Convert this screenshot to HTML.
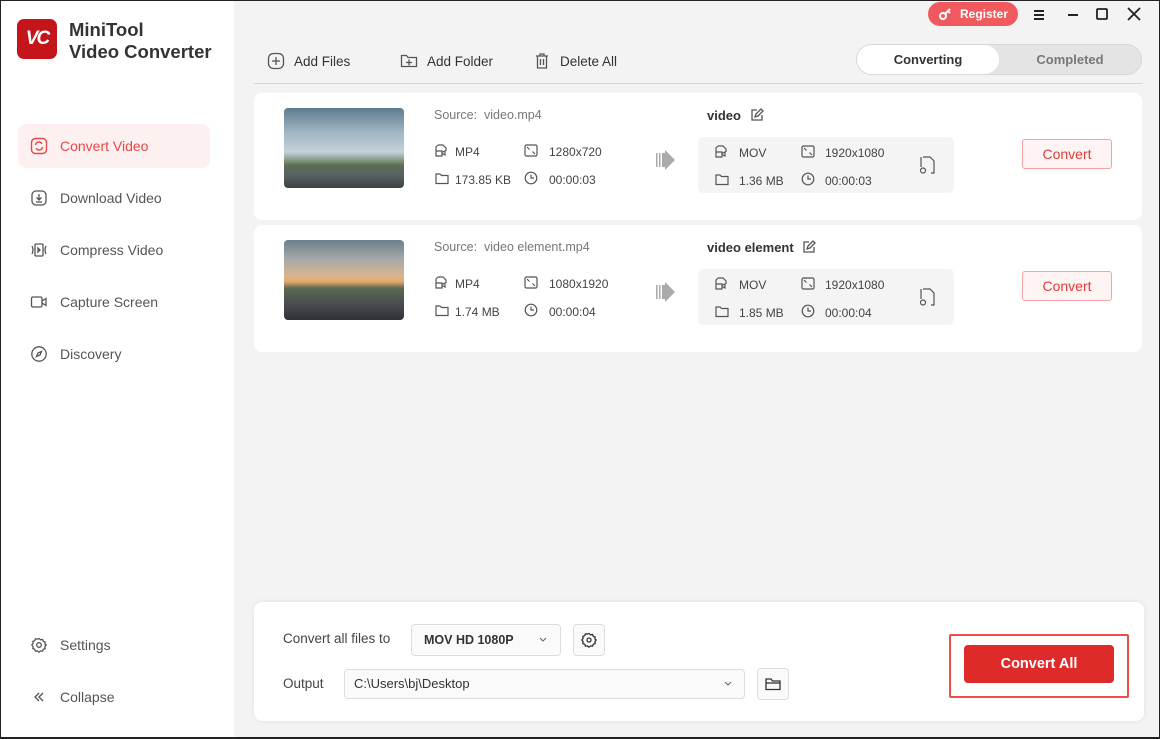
<!DOCTYPE html>
<html><head><meta charset="utf-8"><style>
*{margin:0;padding:0;box-sizing:border-box}
body{width:1160px;height:739px;overflow:hidden;background:#f3f3f3;font-family:"Liberation Sans",sans-serif;color:#333;position:relative}
.a{position:absolute}
.side{left:0;top:0;width:234px;height:739px;background:#fff}
.nav{left:18px;width:192px;height:44px;display:flex;align-items:center;padding-left:12px;font-size:14px;color:#555}
.nav svg{margin-right:12px}
.card{left:254px;width:888px;height:127px;background:#fff;border-radius:8px}
.sm{font-size:12.5px;color:#444}
.g{color:#777}
svg{display:block}
.ic{stroke:#555;fill:none;stroke-width:1.3}
.btn{width:90px;height:30px;border:1px solid #f3a3a3;background:#fff4f4;border-radius:3px;color:#e53a3a;font-size:14px;text-align:center;line-height:28px}
.out{left:698px;width:256px;height:56px;background:#f4f4f4;border-radius:5px}
</style></head><body>
<div class="a side"></div>
<div class="a" style="left:17px;top:19px;width:40px;height:40px;border-radius:7px;background:#c4151b;color:#fff;font-weight:bold;font-style:italic;font-size:19px;text-align:center;line-height:40px;letter-spacing:-2px">VC</div>
<div class="a" style="left:69px;top:19px;font-size:18.5px;font-weight:bold;color:#333;line-height:22px">MiniTool<br>Video Converter</div>
<div class="a" style="left:18px;top:124px;width:192px;height:44px;background:#fdf0f0;border-radius:8px"></div>
<div class="a nav" style="top:124px;color:#e94646">
<svg width="18" height="18" viewBox="0 0 18 18"><rect x="1.5" y="1.5" width="15" height="15" rx="4" fill="none" stroke="#e94646" stroke-width="1.4"/><path d="M5.5 8a3.5 3.5 0 0 1 6.5-1.2M12.5 10a3.5 3.5 0 0 1-6.5 1.2" fill="none" stroke="#e94646" stroke-width="1.4"/></svg>Convert Video</div>
<div class="a nav" style="top:176px"><svg width="18" height="18" viewBox="0 0 18 18" class="ic"><rect x="2" y="2" width="14" height="14" rx="4"/><path d="M9 5v6M6.5 8.5 9 11l2.5-2.5M6 13h6"/></svg>Download Video</div>
<div class="a nav" style="top:228px"><svg width="18" height="18" viewBox="0 0 18 18" class="ic"><path d="M2 5q2 4 0 8M16 5q-2 4 0 8"/><rect x="5" y="3" width="8" height="12" rx="1"/><path d="M8 7l2 2-2 2z"/></svg>Compress Video</div>
<div class="a nav" style="top:280px"><svg width="18" height="18" viewBox="0 0 18 18" class="ic"><rect x="1.5" y="4" width="10.5" height="10" rx="1.5"/><path d="M12 8l4-2.5v7L12 10"/></svg>Capture Screen</div>
<div class="a nav" style="top:332px"><svg width="18" height="18" viewBox="0 0 18 18" class="ic"><circle cx="9" cy="9" r="7.2"/><path d="M11.5 6.5 10 10 6.5 11.5 8 8z"/></svg>Discovery</div>
<div class="a nav" style="top:623px"><svg width="18" height="18" viewBox="0 0 18 18" class="ic"><circle cx="9" cy="9" r="2.3"/><path d="M9 2.5l1.6 1.3 2-.3.7 1.9 1.9.7-.3 2L16.2 9l-1.3 1.6.3 2-1.9.7-.7 1.9-2-.3L9 16.2l-1.6-1.3-2 .3-.7-1.9-1.9-.7.3-2L1.8 9l1.3-1.6-.3-2 1.9-.7.7-1.9 2 .3z"/></svg>Settings</div>
<div class="a nav" style="top:675px"><svg width="18" height="18" viewBox="0 0 18 18" class="ic"><path d="M9 5 5 9l4 4M13 5 9 9l4 4"/></svg>Collapse</div>

<div class="a" style="left:928px;top:2px;width:90px;height:24px;border-radius:12px;background:#f05a5f;color:#fff;font-size:12px;font-weight:bold;line-height:24px;padding-left:32px">Register</div>
<svg class="a" style="left:938px;top:7px" width="16" height="14" viewBox="0 0 16 14"><circle cx="5" cy="9" r="3" fill="none" stroke="#fff" stroke-width="2"/><path d="M7 7l5-5M10 4l2 2" stroke="#fff" stroke-width="2"/></svg>
<svg class="a" style="left:1032px;top:8px" width="14" height="14" viewBox="0 0 14 14"><path d="M2 3h10M2 7h10M2 11h10" stroke="#222" stroke-width="2"/></svg>
<svg class="a" style="left:1066px;top:8px" width="14" height="14" viewBox="0 0 14 14"><path d="M2 7h10" stroke="#222" stroke-width="2"/></svg>
<svg class="a" style="left:1095px;top:7px" width="14" height="14" viewBox="0 0 14 14"><rect x="2" y="2" width="10" height="10" rx="1" fill="none" stroke="#222" stroke-width="1.8"/></svg>
<svg class="a" style="left:1127px;top:7px" width="14" height="14" viewBox="0 0 14 14"><path d="M1 1l12 12M13 1 1 13" stroke="#222" stroke-width="1.8"/></svg>

<div class="a" style="left:856px;top:44px;width:286px;height:31px;border-radius:16px;background:#e4e4e4;border:1px solid #d8d8d8"></div>
<div class="a" style="left:857px;top:45px;width:142px;height:29px;border-radius:15px;background:#fff;font-size:13px;font-weight:bold;text-align:center;line-height:29px;color:#333">Converting</div>
<div class="a" style="left:999px;top:45px;width:142px;height:29px;font-size:13px;font-weight:bold;text-align:center;line-height:29px;color:#777">Completed</div>

<svg class="a ic" style="left:267px;top:52px" width="18" height="18" viewBox="0 0 18 18"><rect x="1.5" y="1.5" width="15" height="15" rx="5"/><path d="M9 5v8M5 9h8"/></svg>
<div class="a" style="left:294px;top:54px;font-size:13.5px;color:#333">Add Files</div>
<svg class="a ic" style="left:400px;top:52px" width="18" height="18" viewBox="0 0 18 18"><path d="M1.5 3.5h5l1.5 2h8.5v9h-15z"/><path d="M9 7.5v6M6 10.5h6"/></svg>
<div class="a" style="left:427px;top:54px;font-size:13.5px;color:#333">Add Folder</div>
<svg class="a ic" style="left:534px;top:52px" width="16" height="18" viewBox="0 0 16 18"><path d="M2 4h12M6 4V2h4v2M3.5 4v12h9V4M6.5 7v6M9.5 7v6"/></svg>
<div class="a" style="left:560px;top:54px;font-size:13.5px;color:#333">Delete All</div>
<div class="a" style="left:254px;top:83px;width:888px;height:1px;background:#d6d6d6"></div>

<div class="a card" style="top:93px"></div>
<div class="a" style="left:284px;top:108px;width:120px;height:80px;border-radius:4px;background:linear-gradient(180deg,#5e7b8e 0%,#9fb5c2 30%,#c4d2d8 55%,#5a6d4e 72%,#5a6466 82%,#3c4144 100%)"></div>
<div class="a sm g" style="left:434px;top:108px">Source:&nbsp; video.mp4</div>
<div class="a" style="left:707px;top:108px;font-size:13px;font-weight:bold;color:#333">video</div>
<div class="a card" style="top:225px"></div>
<div class="a" style="left:284px;top:240px;width:120px;height:80px;border-radius:4px;background:linear-gradient(180deg,#6c7f8c 0%,#a7aaa8 25%,#d9b48e 45%,#e9a66a 52%,#5d6a55 60%,#525b50 70%,#4a4d52 80%,#2f3134 100%)"></div>
<div class="a sm g" style="left:434px;top:240px">Source:&nbsp; video element.mp4</div>
<div class="a" style="left:707px;top:240px;font-size:13px;font-weight:bold;color:#333">video element</div>

<div class="a out" style="top:137px"></div>
<div class="a out" style="top:269px"></div>

<svg class="a ic" style="left:750px;top:108px" width="14" height="14" viewBox="0 0 14 14"><path d="M7 2H2v10h10V7M5 9l1-3 5-5 2 2-5 5z"/></svg>
<svg class="a ic" style="left:802px;top:240px" width="14" height="14" viewBox="0 0 14 14"><path d="M7 2H2v10h10V7M5 9l1-3 5-5 2 2-5 5z"/></svg>

<div class="a btn" style="left:1022px;top:139px">Convert</div>
<div class="a btn" style="left:1022px;top:271px">Convert</div>

<div class="a" style="left:254px;top:602px;width:890px;height:119px;background:#fff;border-radius:8px;box-shadow:0 0 6px rgba(0,0,0,.08)"></div>
<div class="a" style="left:283px;top:631px;font-size:13.5px;color:#444">Convert all files to</div>
<div class="a" style="left:411px;top:624px;width:150px;height:32px;border:1px solid #ddd;border-radius:4px;background:#fafafa;font-size:12.5px;font-weight:bold;line-height:30px;padding-left:12px;color:#333">MOV HD 1080P</div>
<svg class="a" style="left:538px;top:636px" width="10" height="8" viewBox="0 0 10 8"><path d="M2 2l3 3 3-3" stroke="#666" fill="none"/></svg>
<div class="a" style="left:573px;top:624px;width:32px;height:32px;border:1px solid #ddd;border-radius:4px;background:#fafafa"></div>
<svg class="a ic" style="left:580px;top:631px;stroke:#333" width="18" height="18" viewBox="0 0 18 18"><circle cx="9" cy="9" r="2"/><path d="M9 2.5l1.6 1.3 2-.3.7 1.9 1.9.7-.3 2L16.2 9l-1.3 1.6.3 2-1.9.7-.7 1.9-2-.3L9 16.2l-1.6-1.3-2 .3-.7-1.9-1.9-.7.3-2L1.8 9l1.3-1.6-.3-2 1.9-.7.7-1.9 2 .3z"/></svg>
<div class="a" style="left:283px;top:676px;font-size:13.5px;color:#444">Output</div>
<div class="a" style="left:344px;top:669px;width:401px;height:30px;border:1px solid #ddd;border-radius:4px;background:#fafafa;font-size:13px;line-height:28px;padding-left:9px;color:#333">C:\Users\bj\Desktop</div>
<svg class="a" style="left:723px;top:680px" width="10" height="8" viewBox="0 0 10 8"><path d="M2 2l3 3 3-3" stroke="#666" fill="none"/></svg>
<div class="a" style="left:757px;top:668px;width:32px;height:32px;border:1px solid #ddd;border-radius:4px;background:#fafafa"></div>
<svg class="a ic" style="left:764px;top:675px;stroke:#333" width="18" height="18" viewBox="0 0 18 18"><path d="M2 4h5l1.5 2H16v8.5H2z"/><path d="M2 8h14"/></svg>
<div class="a" style="left:949px;top:634px;width:180px;height:64px;border:2px solid #ef4c4c;border-radius:2px"></div>
<div class="a" style="left:964px;top:645px;width:150px;height:38px;background:#df2a2a;border-radius:4px;color:#fff;font-size:14.5px;font-weight:bold;text-align:center;line-height:38px">Convert All</div>

<div class="a" style="left:0;top:0;width:1160px;height:739px;border:1px solid #222;border-width:1px 1px 2px 1px;pointer-events:none"></div>

<svg class="a" style="left:0;top:0" width="1160" height="739">
<g fill="none" stroke="#555" stroke-width="1.2">
<g transform="translate(435,144)"><path d="M3 1h5l3 3v3M1 9V3l2-2M1 7h6v5H1zM7 8.5l3-1.5v4l-3-1.5"/></g>
<g transform="translate(524,144)"><rect x="1" y="1" width="12" height="11" rx="1.5"/><path d="M3 3l2.5 2.5M11 10l-2.5-2.5"/></g>
<g transform="translate(435,172)"><path d="M1 2h4l1.5 1.5h6.5v8H1z"/></g>
<g transform="translate(524,171)"><circle cx="7" cy="7" r="5.8"/><path d="M7 3.5v3.5h3"/></g>
<g transform="translate(715,145)"><path d="M3 1h5l3 3v3M1 9V3l2-2M1 7h6v5H1zM7 8.5l3-1.5v4l-3-1.5"/></g>
<g transform="translate(801,145)"><rect x="1" y="1" width="12" height="11" rx="1.5"/><path d="M3 3l2.5 2.5M11 10l-2.5-2.5"/></g>
<g transform="translate(715,173)"><path d="M1 2h4l1.5 1.5h6.5v8H1z"/></g>
<g transform="translate(801,172)"><circle cx="7" cy="7" r="5.8"/><path d="M7 3.5v3.5h3"/></g>
<g transform="translate(918,156)"><path d="M5 1h7l4 4v12h-3M3 11V1"/><circle cx="5" cy="14.5" r="2.5"/></g>
<g transform="translate(435,276)"><path d="M3 1h5l3 3v3M1 9V3l2-2M1 7h6v5H1zM7 8.5l3-1.5v4l-3-1.5"/></g>
<g transform="translate(524,276)"><rect x="1" y="1" width="12" height="11" rx="1.5"/><path d="M3 3l2.5 2.5M11 10l-2.5-2.5"/></g>
<g transform="translate(435,304)"><path d="M1 2h4l1.5 1.5h6.5v8H1z"/></g>
<g transform="translate(524,303)"><circle cx="7" cy="7" r="5.8"/><path d="M7 3.5v3.5h3"/></g>
<g transform="translate(715,277)"><path d="M3 1h5l3 3v3M1 9V3l2-2M1 7h6v5H1zM7 8.5l3-1.5v4l-3-1.5"/></g>
<g transform="translate(801,277)"><rect x="1" y="1" width="12" height="11" rx="1.5"/><path d="M3 3l2.5 2.5M11 10l-2.5-2.5"/></g>
<g transform="translate(715,305)"><path d="M1 2h4l1.5 1.5h6.5v8H1z"/></g>
<g transform="translate(801,304)"><circle cx="7" cy="7" r="5.8"/><path d="M7 3.5v3.5h3"/></g>
<g transform="translate(918,288)"><path d="M5 1h7l4 4v12h-3M3 11V1"/><circle cx="5" cy="14.5" r="2.5"/></g>
</g>
<g fill="#aaa"><path d="M656 153h1.5v14H656zM659 153h1.5v14H659zM662 153h3v14h-3zM665 150l10 10-10 10z"/><path d="M656 285h1.5v14H656zM659 285h1.5v14H659zM662 285h3v14h-3zM665 282l10 10-10 10z"/></g>
<g font-family="Liberation Sans, sans-serif" font-size="12" fill="#444">
<text x="455" y="156">MP4</text><text x="549" y="156">1280x720</text><text x="455" y="184">173.85 KB</text><text x="549" y="184">00:00:03</text>
<text x="739" y="157">MOV</text><text x="825" y="157">1920x1080</text><text x="739" y="185">1.36 MB</text><text x="825" y="185">00:00:03</text>
<text x="455" y="288">MP4</text><text x="549" y="288">1080x1920</text><text x="455" y="316">1.74 MB</text><text x="549" y="316">00:00:04</text>
<text x="739" y="289">MOV</text><text x="825" y="289">1920x1080</text><text x="739" y="317">1.85 MB</text><text x="825" y="317">00:00:04</text>
</g>
</svg>
</body></html>
